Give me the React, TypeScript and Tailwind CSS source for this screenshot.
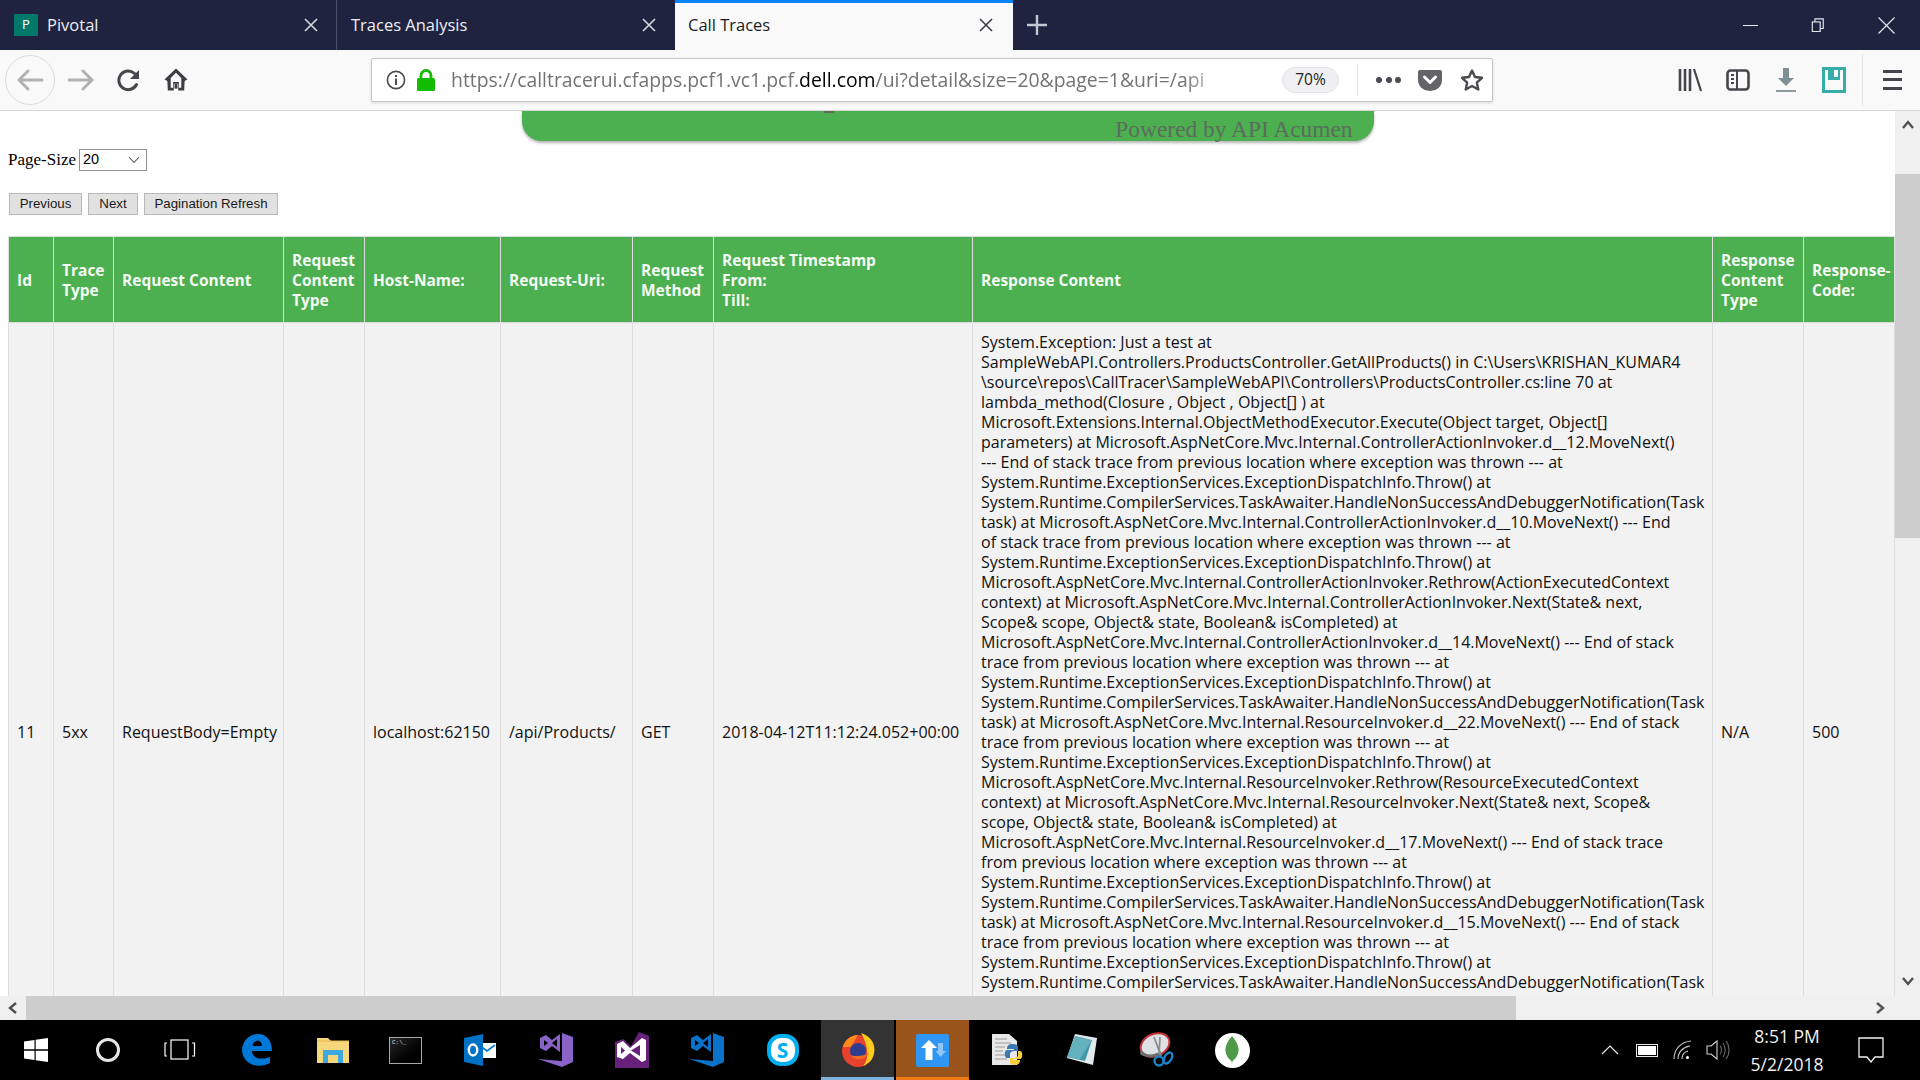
import React from 'react';

const responseLines = [
  'System.Exception: Just a test at',
  'SampleWebAPI.Controllers.ProductsController.GetAllProducts() in C:\\Users\\KRISHAN_KUMAR4',
  '\\source\\repos\\CallTracer\\SampleWebAPI\\Controllers\\ProductsController.cs:line 70 at',
  'lambda_method(Closure , Object , Object[] ) at',
  'Microsoft.Extensions.Internal.ObjectMethodExecutor.Execute(Object target, Object[]',
  'parameters) at Microsoft.AspNetCore.Mvc.Internal.ControllerActionInvoker.d__12.MoveNext()',
  '--- End of stack trace from previous location where exception was thrown --- at',
  'System.Runtime.ExceptionServices.ExceptionDispatchInfo.Throw() at',
  'System.Runtime.CompilerServices.TaskAwaiter.HandleNonSuccessAndDebuggerNotification(Task',
  'task) at Microsoft.AspNetCore.Mvc.Internal.ControllerActionInvoker.d__10.MoveNext() --- End',
  'of stack trace from previous location where exception was thrown --- at',
  'System.Runtime.ExceptionServices.ExceptionDispatchInfo.Throw() at',
  'Microsoft.AspNetCore.Mvc.Internal.ControllerActionInvoker.Rethrow(ActionExecutedContext',
  'context) at Microsoft.AspNetCore.Mvc.Internal.ControllerActionInvoker.Next(State& next,',
  'Scope& scope, Object& state, Boolean& isCompleted) at',
  'Microsoft.AspNetCore.Mvc.Internal.ControllerActionInvoker.d__14.MoveNext() --- End of stack',
  'trace from previous location where exception was thrown --- at',
  'System.Runtime.ExceptionServices.ExceptionDispatchInfo.Throw() at',
  'System.Runtime.CompilerServices.TaskAwaiter.HandleNonSuccessAndDebuggerNotification(Task',
  'task) at Microsoft.AspNetCore.Mvc.Internal.ResourceInvoker.d__22.MoveNext() --- End of stack',
  'trace from previous location where exception was thrown --- at',
  'System.Runtime.ExceptionServices.ExceptionDispatchInfo.Throw() at',
  'Microsoft.AspNetCore.Mvc.Internal.ResourceInvoker.Rethrow(ResourceExecutedContext',
  'context) at Microsoft.AspNetCore.Mvc.Internal.ResourceInvoker.Next(State& next, Scope&',
  'scope, Object& state, Boolean& isCompleted) at',
  'Microsoft.AspNetCore.Mvc.Internal.ResourceInvoker.d__17.MoveNext() --- End of stack trace',
  'from previous location where exception was thrown --- at',
  'System.Runtime.ExceptionServices.ExceptionDispatchInfo.Throw() at',
  'System.Runtime.CompilerServices.TaskAwaiter.HandleNonSuccessAndDebuggerNotification(Task',
  'task) at Microsoft.AspNetCore.Mvc.Internal.ResourceInvoker.d__15.MoveNext() --- End of stack',
  'trace from previous location where exception was thrown --- at',
  'System.Runtime.ExceptionServices.ExceptionDispatchInfo.Throw() at',
  'System.Runtime.CompilerServices.TaskAwaiter.HandleNonSuccessAndDebuggerNotification(Task',
];

function TabClose({ color = '#d7d8e0' }: { color?: string }) {
  return (
    <svg width="16" height="16" viewBox="0 0 16 16" className="shrink-0">
      <path d="M2 2 L14 14 M14 2 L2 14" stroke={color} strokeWidth="1.6" fill="none" />
    </svg>
  );
}

function TabBar() {
  return (
    <div className="flex h-[50px] shrink-0 bg-[#202340] font-['Open_Sans',sans-serif] text-[16.5px]">
      <div className="flex w-[337px] items-center border-r border-[#4a4d68] pl-[14px] pr-[17px] text-[#eceef3]">
        <div className="flex h-[22px] w-[24px] items-center justify-center rounded-[1px] bg-[#00796b] text-[13px] text-white">P</div>
        <span className="ml-[9px] flex-1">Pivotal</span>
        <TabClose />
      </div>
      <div className="flex w-[338px] items-center pl-[14px] pr-[18px] text-[#eceef3]">
        <span className="flex-1">Traces Analysis</span>
        <TabClose />
      </div>
      <div className="flex w-[338px] items-center border-t-[3px] border-[#0a84ff] bg-[#f9f9fa] pl-[13px] pr-[19px] pb-[3px] text-[#1c1c24]">
        <span className="flex-1">Call Traces</span>
        <TabClose color="#3d3d46" />
      </div>
      <div className="flex w-[48px] items-center justify-center">
        <svg width="22" height="22" viewBox="0 0 22 22">
          <path d="M11 1 V21 M1 11 H21" stroke="#c5c7d2" strokeWidth="2.4" fill="none" />
        </svg>
      </div>
      <div className="flex-1" />
      <div className="flex w-[68px] items-center justify-center">
        <div className="h-px w-[15px] bg-[#e8e9ee]" />
      </div>
      <div className="flex w-[68px] items-center justify-center">
        <svg width="14" height="14" viewBox="0 0 16 16" fill="none" stroke="#e8e9ee" strokeWidth="1.3">
          <rect x="1.5" y="4.5" width="9" height="11" fill="#202340" />
          <path d="M4.5 4.5 V1 H14 V12 H10.5" />
        </svg>
      </div>
      <div className="flex w-[68px] items-center justify-center">
        <svg width="17" height="17" viewBox="0 0 17 17">
          <path d="M0.5 0.5 L16.5 16.5 M16.5 0.5 L0.5 16.5" stroke="#e8e9ee" strokeWidth="1.1" fill="none" />
        </svg>
      </div>
    </div>
  );
}

function NavIcons() {
  return (
    <div className="flex items-center">
      <div className="ml-[5px] flex h-[50px] w-[50px] items-center justify-center rounded-full border border-[#dcdcdf]">
        <svg width="28" height="24" viewBox="0 0 28 24" fill="none" stroke="#b1b1b3" strokeWidth="3" strokeLinecap="round" strokeLinejoin="round">
          <path d="M26 12 H3 M12 3 L3 12 L12 21" />
        </svg>
      </div>
      <div className="ml-[11px] flex w-[30px] justify-center">
        <svg width="26" height="24" viewBox="0 0 26 24" fill="none" stroke="#b1b1b3" strokeWidth="3" strokeLinecap="round" strokeLinejoin="round">
          <path d="M1 12 H24 M15 3 L24 12 L15 21" />
        </svg>
      </div>
      <div className="ml-[21px] flex w-[24px] justify-center">
        <svg width="24" height="24" viewBox="0 0 24 24" fill="none">
          <path d="M19.5 16.5 A9.3 9.3 0 1 1 17.5 5.5" stroke="#45454c" strokeWidth="3" strokeLinecap="round" />
          <path d="M22 2 V11 H13 Z" fill="#45454c" />
        </svg>
      </div>
      <div className="ml-[23px] flex w-[24px] justify-center">
        <svg width="25" height="25" viewBox="0 0 25 25">
          <path d="M12.5 1 L24.5 12.5 L21.5 14 L21 24 H14.8 V17 H10.2 V24 H4 L3.5 14 L.5 12.5 Z" fill="#3d3d44" />
          <path d="M12.5 5.5 L18 11 V21 H15.5 V15 H9.5 V21 H7 V11 Z" fill="#f9f9fa" />
          <rect x="11" y="17" width="3" height="5" fill="#3d3d44" />
        </svg>
      </div>
    </div>
  );
}

function UrlBar() {
  return (
    <div className="ml-[183px] flex h-[44px] w-[1122px] shrink-0 items-center rounded-[2px] border border-[#c5c5c8] bg-white font-['Open_Sans',sans-serif] shadow-[0_1px_3px_rgba(0,0,0,0.12)]">
      <svg width="20" height="20" viewBox="0 0 20 20" fill="none" className="ml-[14px] shrink-0">
        <circle cx="10" cy="10" r="8.6" stroke="#4a4a50" strokeWidth="1.6" />
        <rect x="9" y="8.5" width="2" height="6.5" fill="#4a4a50" />
        <rect x="9" y="5" width="2" height="2" fill="#4a4a50" />
      </svg>
      <svg width="20" height="22" viewBox="0 0 20 22" className="ml-[10px] shrink-0">
        <path d="M5 10 V6.5 A5 5 0 0 1 15 6.5 V10" stroke="#12bc00" strokeWidth="2.8" fill="none" />
        <rect x="1" y="9" width="18" height="13" rx="1.5" fill="#12bc00" />
      </svg>
      <div className="ml-[15px] w-[780px] overflow-hidden whitespace-nowrap text-[19.4px] text-[#737373] [mask-image:linear-gradient(to_right,black_94%,transparent)]">
        https://calltracerui.cfapps.pcf1.vc1.pcf.<span className="text-black">dell.com</span>/ui?detail&amp;size=20&amp;page=1&amp;uri=/api
      </div>
      <div className="ml-[51px] flex h-[26px] w-[57px] shrink-0 items-center justify-center rounded-full border border-[#e4e4e6] bg-[#f0f0f2] text-[15.5px] text-[#222]">70%</div>
      <div className="ml-[18px] h-[32px] w-px bg-[#e3e3e5]" />
      <div className="ml-[18px] flex w-[25px] justify-between">
        <div className="h-[6px] w-[6px] rounded-full bg-[#4a4a50]" />
        <div className="h-[6px] w-[6px] rounded-full bg-[#4a4a50]" />
        <div className="h-[6px] w-[6px] rounded-full bg-[#4a4a50]" />
      </div>
      <svg width="24" height="22" viewBox="0 0 24 22" className="ml-[17px] shrink-0">
        <path d="M2 1 H22 Q24 1 24 3 V10 Q24 21 12 22 Q0 21 0 10 V3 Q0 1 2 1 Z" fill="#636368" />
        <path d="M6.5 8 L12 13.5 L17.5 8" stroke="#fff" strokeWidth="3" fill="none" strokeLinecap="round" strokeLinejoin="round" />
      </svg>
      <svg width="24" height="24" viewBox="0 0 24 24" className="ml-[18px] shrink-0">
        <path d="M12 2.5 L15 9 L22 9.8 L16.8 14.6 L18.3 21.5 L12 18 L5.7 21.5 L7.2 14.6 L2 9.8 L9 9 Z" fill="none" stroke="#4a4a50" strokeWidth="2.4" strokeLinejoin="round" />
      </svg>
    </div>
  );
}

function NavRight() {
  return (
    <div className="flex flex-1 items-center">
      <svg width="24" height="24" viewBox="0 0 24 24" className="ml-[185px] shrink-0" stroke="#45454c" fill="none">
        <path d="M2 1 V23 M7 1 V23 M12 1 V23" strokeWidth="2.6" />
        <path d="M16 1 L23 23" strokeWidth="2.2" />
      </svg>
      <svg width="24" height="24" viewBox="0 0 24 24" className="ml-[24px] shrink-0" fill="none">
        <rect x="1.5" y="2.5" width="21" height="19" rx="3" stroke="#45454c" strokeWidth="2.6" />
        <path d="M11 3 V21" stroke="#45454c" strokeWidth="2" />
        <path d="M5 7 H8 M5 11 H8 M5 15 H8" stroke="#45454c" strokeWidth="1.8" />
      </svg>
      <svg width="20" height="26" viewBox="0 0 20 26" className="ml-[26px] shrink-0">
        <path d="M7 1 H13 V11 H18 L10 19 L2 11 H7 Z" fill="#7c9095" />
        <rect x="0" y="23" width="20" height="2" fill="#8f9a9d" />
      </svg>
      <svg width="24" height="26" viewBox="0 0 24 26" className="ml-[26px] shrink-0" fill="none">
        <path d="M1.5 1.5 H22.5 V24.5 H1.5 Z" stroke="#36ada8" strokeWidth="3" />
        <path d="M6 1 H18 V13 H6 Z" fill="#36ada8" />
        <rect x="12" y="3" width="4" height="7" fill="#f9f9fa" />
      </svg>
      <div className="ml-[16px] h-[52px] w-px bg-[#e3e3e5]" />
      <div className="ml-[20px] flex h-[20px] w-[19px] flex-col justify-between">
        <div className="h-[3px] bg-[#45454c]" />
        <div className="h-[3px] bg-[#45454c]" />
        <div className="h-[3px] bg-[#45454c]" />
      </div>
    </div>
  );
}

function Chevron({ d }: { d: string }) {
  return (
    <svg width="14" height="14" viewBox="0 0 14 14" className="shrink-0">
      <path d={d} stroke="#505050" strokeWidth="2.4" fill="none" />
    </svg>
  );
}

function TraceTable() {
  const thClass = "border border-[#dddddd] bg-[#4caf50] px-2 text-left text-[15.5px] font-bold leading-[20px] text-[#f4fbf4]";
  const tdClass = "border border-[#dddddd] px-2 align-middle whitespace-nowrap";
  return (
    <table className="ml-2 w-[1886px] table-fixed border-collapse bg-[#f2f2f2] font-['Open_Sans',sans-serif] text-[16px] leading-[20px] text-[#111]">
      <colgroup>
        <col className="w-[45px]" />
        <col className="w-[60px]" />
        <col className="w-[170px]" />
        <col className="w-[81px]" />
        <col className="w-[136px]" />
        <col className="w-[132px]" />
        <col className="w-[81px]" />
        <col className="w-[259px]" />
        <col className="w-[740px]" />
        <col className="w-[91px]" />
        <col className="w-[91px]" />
      </colgroup>
      <thead>
        <tr className="h-[86px]">
          <th className={thClass}>Id</th>
          <th className={thClass}>Trace Type</th>
          <th className={thClass}>Request Content</th>
          <th className={thClass}>Request Content Type</th>
          <th className={thClass}>Host-Name:</th>
          <th className={thClass}>Request-Uri:</th>
          <th className={thClass}>Request Method</th>
          <th className={thClass}>
            Request Timestamp
            <br />
            From:
            <br />
            Till:
          </th>
          <th className={thClass}>Response Content</th>
          <th className={thClass}>Response Content Type</th>
          <th className={thClass}>Response-Code:</th>
        </tr>
      </thead>
      <tbody>
        <tr className="h-[818px]">
          <td className={tdClass}>11</td>
          <td className={tdClass}>5xx</td>
          <td className={tdClass}>RequestBody=Empty</td>
          <td className={tdClass}></td>
          <td className={tdClass}>localhost:62150</td>
          <td className={tdClass}>/api/Products/</td>
          <td className={tdClass}>GET</td>
          <td className={tdClass}>2018-04-12T11:12:24.052+00:00</td>
          <td className="border border-[#dddddd] px-2 pt-[9px] align-top whitespace-nowrap">
            {responseLines.map((line, i) => (
              <div key={i}>{line}</div>
            ))}
          </td>
          <td className={tdClass}>N/A</td>
          <td className={tdClass}>500</td>
        </tr>
      </tbody>
    </table>
  );
}

function PageContent() {
  const btn = "h-[22px] border border-[#b8b8b8] bg-[#e1e1e1] text-[13.3px] leading-none text-[#1a1a1a] font-['Liberation_Sans',sans-serif]";
  return (
    <div className="h-full overflow-hidden bg-white">
      <div className="mx-auto h-[30px] w-[852px] rounded-b-[20px] bg-[#4caf50] shadow-[0_2px_3px_rgba(0,0,0,0.3)]">
        <div className="ml-[302px] h-[2px] w-[10px] bg-[#5e6a5f]" />
        <div className="pr-[21px] text-right font-['Liberation_Serif',serif] text-[23.4px] leading-[32px] text-[#5c6c5d]">Powered by API Acumen</div>
      </div>
      <div className="ml-2 mt-[8px] flex h-[22px] items-center font-['Liberation_Serif',serif] text-[17px] text-black">
        Page-Size
        <div className="ml-[3px] flex h-[22px] w-[68px] items-center justify-between border border-[#8f8f8f] bg-white pl-[3px] pr-[6px] font-['Liberation_Sans',sans-serif] text-[14.5px]">
          20
          <svg width="12" height="8" viewBox="0 0 12 8">
            <path d="M1 1 L6 6.5 L11 1" stroke="#555" strokeWidth="1.1" fill="none" />
          </svg>
        </div>
      </div>
      <div className="ml-[9px] mt-[22px] flex gap-[6px]">
        <button className={`${btn} w-[73px]`}>Previous</button>
        <button className={`${btn} w-[50px]`}>Next</button>
        <button className={`${btn} w-[134px]`}>Pagination Refresh</button>
      </div>
      <div className="mt-[21px]">
        <TraceTable />
      </div>
    </div>
  );
}

function Slot({ w, bg = '', bar = '', children }: { w: string; bg?: string; bar?: string; children?: React.ReactNode }) {
  return (
    <div className={`relative flex h-full shrink-0 items-center justify-center ${w} ${bg}`}>
      {children}
      {bar && <div className={`absolute bottom-0 left-0 right-0 h-[3px] ${bar}`} />}
    </div>
  );
}

function VsLogo({ color }: { color: string }) {
  return (
    <svg width="36" height="36" viewBox="0 0 36 36">
      <path d="M24 1 L35 5 V30 L24 35 L0 27 L24 29 Z" fill={color} />
      <path d="M2 6 L8 3 L14 8 L22 2 V20 L14 14 L8 19 L2 16 Z M6 8 V14 L10 11 Z M14 11 L19 15 V7 Z" fill={color} fillRule="evenodd" />
    </svg>
  );
}

function TaskIcons() {
  return (
    <div className="flex h-full items-center">
      <Slot w="w-[72px]">
        <svg width="24" height="24" viewBox="0 0 24 24" fill="#fff">
          <path d="M0 3.5 L10.5 2 V11.3 H0 Z M11.7 1.8 L24 0 V11.3 H11.7 Z M0 12.7 H10.5 V22 L0 20.5 Z M11.7 12.7 H24 V24 L11.7 22.2 Z" />
        </svg>
      </Slot>
      <Slot w="w-[72px]">
        <div className="h-[24px] w-[24px] rounded-full border-[3px] border-[#e5e5e5]" />
      </Slot>
      <Slot w="w-[72px]">
        <svg width="32" height="22" viewBox="0 0 32 22" fill="none" stroke="#fff" strokeWidth="1.2">
          <rect x="7" y="1" width="17" height="19" />
          <path d="M3 4 H1 V17 H3 M28 4 H30.5 V17 H28" />
        </svg>
      </Slot>
      <Slot w="w-[81px]">
        <svg width="32" height="32" viewBox="0 0 32 32">
          <path d="M1 17 C1 6 9 0 17 0 C26 0 31 7 31 17 H11 C11 23 18 27 29 23 V29 C20 34 3 33 1 17 Z M11.5 12 H21 C21 5 12 5 11.5 12 Z" fill="#0078d7" fillRule="evenodd" />
        </svg>
      </Slot>
      <Slot w="w-[71px]">
        <svg width="32" height="28" viewBox="0 0 32 28">
          <path d="M0 2 H11 L14 5 H32 V27 H0 Z" fill="#f6d77c" />
          <path d="M0 5 H32" stroke="#e5b94e" strokeWidth="1" />
          <path d="M6 14 H26 V27 H21 V19 H11 V27 H6 Z" fill="#3ca9e0" />
        </svg>
      </Slot>
      <Slot w="w-[75px]">
        <div className="h-[27px] w-[33px] border border-[#a8a8a8] bg-gradient-to-br from-[#2a2a2a] to-black pl-[2px] font-['Liberation_Mono',monospace] text-[6px] leading-[9px] text-[#ddd]">C:\_</div>
      </Slot>
      <Slot w="w-[74px]">
        <svg width="32" height="32" viewBox="0 0 32 32">
          <rect x="14" y="9" width="18" height="15" fill="#fff" />
          <path d="M15 11 L23 17 L31 11" stroke="#0078d7" strokeWidth="1.6" fill="none" />
          <path d="M0 4 L19 0 V32 L0 28 Z" fill="#0072c6" />
          <ellipse cx="9" cy="16" rx="4.2" ry="5.5" fill="none" stroke="#fff" strokeWidth="2.4" />
        </svg>
      </Slot>
      <Slot w="w-[77px]">
        <VsLogo color="#8a63c8" />
      </Slot>
      <Slot w="w-[75px]">
        <svg width="34" height="36" viewBox="0 0 34 36">
          <path d="M24 0 L34 4 V36 H0 V10 L8 7 L16 14 Z" fill="#68217a" />
          <path d="M2 12 L8 9 L15 16 L27 6 L31 8 V28 L27 30 L15 21 L8 27 L2 25 Z M6 15 V22 L10 18.5 Z M16 18.5 L25 24 V13 Z" fill="#fff" fillRule="evenodd" />
        </svg>
      </Slot>
      <Slot w="w-[75px]">
        <VsLogo color="#0a72c8" />
      </Slot>
      <Slot w="w-[77px]">
        <div className="flex h-[32px] w-[32px] items-center justify-center rounded-[14px] border-[4px] border-[#00aff0] bg-white font-['Open_Sans',sans-serif] text-[21px] font-bold leading-none text-[#00aff0]">S</div>
      </Slot>
      <Slot w="w-[73px]" bg="bg-[#333333]" bar="bg-[#7fb3dc]">
        <svg width="34" height="34" viewBox="0 0 34 34">
          <circle cx="17" cy="18" r="16" fill="#e8422f" />
          <path d="M2 14 A16 16 0 0 1 17 2 L10 14 Z" fill="#ff8a1e" />
          <path d="M20 0 C30 3 35 12 33 20 C32 27 27 31 22 33 C28 27 28 14 20 0 Z" fill="#ffcb1f" />
          <circle cx="17" cy="18" r="8" fill="#2f3d8f" />
          <path d="M9 22 C13 28 24 28 28 20 C24 23 14 24 9 22 Z" fill="#f26a21" />
        </svg>
      </Slot>
      <div className="h-full w-[2px]" />
      <Slot w="w-[73px]" bg="bg-[#99541c]" bar="bg-[#f07b15]">
        <div className="flex h-[33px] w-[33px] items-center justify-center rounded-[2px] bg-[#2f96f3]">
          <svg width="28" height="28" viewBox="0 0 28 28">
            <path d="M2 12 L10 4 L18 12 H13.5 V24 H6.5 V12 Z" fill="#fff" />
            <path d="M19 7 H24 V15 H27 L21.5 21 L16.5 15 H19 Z" fill="#8fc6f7" />
          </svg>
        </div>
      </Slot>
      <Slot w="w-[78px]">
        <svg width="34" height="34" viewBox="0 0 34 34">
          <path d="M1 1 H18 L26 8 V32 H1 Z" fill="#e8e8e8" />
          <path d="M4 6 H16 M4 10 H20 M4 14 H14 M4 18 H12 M4 22 H14 M4 26 H16" stroke="#9a9a9a" strokeWidth="1" />
          <path d="M22 11 C17 11 16 13 16 16 H23 V17 H16 C13 17 13 25 16 25 H19 V21 C19 19 21 18 23 18 H27 V14 C27 12 25 11 22 11 Z" fill="#3a78b0" />
          <path d="M23 32 C28 32 29 30 29 27 H22 V26 H29 C32 26 32 18 29 18 H27 V22 C27 24 25 25 23 25 H19 V29 C19 31 21 32 23 32 Z" fill="#f7cf3b" />
        </svg>
      </Slot>
      <Slot w="w-[70px]">
        <svg width="34" height="34" viewBox="0 0 34 34">
          <path d="M10 1 L32 5 L28 32 L2 25 Z" fill="#e4e9ec" />
          <path d="M10 3 L27 7 L20 28 L2 24 Z" fill="#3e9aa8" />
          <path d="M10 3 L27 7 L15 26 L2 24 Z" fill="#7cc1cc" opacity="0.6" />
        </svg>
      </Slot>
      <Slot w="w-[80px]">
        <svg width="36" height="36" viewBox="0 0 36 36">
          <ellipse cx="16" cy="13" rx="15" ry="11" transform="rotate(-25 16 13)" fill="#dfe2e4" stroke="#c6343b" strokeWidth="2" />
          <path d="M2 17 C6 24 14 24 22 19 L22 23 C14 26 6 26 1 22 Z" fill="#6e6e6e" />
          <path d="M15 5 L22 24 M21 5 L20 22" stroke="#8b8f92" strokeWidth="1.8" />
          <circle cx="20" cy="29" r="4.5" fill="none" stroke="#1c83c6" strokeWidth="2.4" />
          <ellipse cx="29" cy="26" rx="3.5" ry="6" transform="rotate(30 29 26)" fill="none" stroke="#1c83c6" strokeWidth="2.4" />
        </svg>
      </Slot>
      <Slot w="w-[70px]">
        <div className="flex h-[35px] w-[35px] items-center justify-center rounded-full bg-white">
          <svg width="14" height="28" viewBox="0 0 14 28">
            <path d="M7 0 C12 6 14 11 13.5 15 C13 20 10 23 7.5 25 L7 28 L6.5 25 C4 23 1 20 .5 15 C0 11 2 6 7 0 Z" fill="#4f9a46" />
          </svg>
        </div>
      </Slot>
    </div>
  );
}

function Tray() {
  return (
    <div className="ml-auto flex h-full items-center text-[#f2f2f2]">
      <svg width="18" height="10" viewBox="0 0 18 10" className="shrink-0">
        <path d="M1 9 L9 1 L17 9" stroke="#e8e8e8" strokeWidth="1.2" fill="none" />
      </svg>
      <div className="ml-[17px] flex h-[13px] w-[22px] items-center justify-center border border-[#e8e8e8] p-px">
        <div className="h-full w-full bg-white" />
      </div>
      <svg width="20" height="20" viewBox="0 0 20 20" fill="none" stroke="#c8c8c8" className="ml-[15px] shrink-0">
        <path d="M1 19 C1 9 8 2 18 1 M5 19 C5 12 10 7 17 6 M9 19 C9 15 11 12 15 11" strokeWidth="1.1" />
        <circle cx="14.5" cy="17.5" r="1.5" fill="#fff" stroke="none" />
      </svg>
      <svg width="24" height="24" viewBox="0 0 24 24" fill="none" stroke="#cfcfcf" strokeWidth="1.1" className="ml-[13px] shrink-0">
        <path d="M1 8 H5 L11 3 V21 L5 16 H1 Z" />
        <path d="M14 8 C16 10 16 14 14 16 M17 5 C20 9 20 15 17 19 M20 3 C24 8 24 16 20 21" stroke="#666" />
      </svg>
      <div className="ml-[7px] w-[100px] text-center font-['Open_Sans',sans-serif] text-[17.5px] leading-[28px]">
        <div>8:51 PM</div>
        <div>5/2/2018</div>
      </div>
      <div className="ml-[15px] flex w-[68px] shrink-0 justify-start pl-[6px]">
        <svg width="26" height="26" viewBox="0 0 26 26" fill="none" stroke="#f2f2f2" strokeWidth="1.3">
          <path d="M1 1 H25 V20 H17 L13 25 L9 20 H1 Z" />
        </svg>
      </div>
    </div>
  );
}

export default function App() {
  return (
    <div className="flex h-screen w-[1920px] flex-col overflow-hidden bg-white">
      <TabBar />
      <div className="flex h-[61px] shrink-0 items-center border-b border-[#d6d6d8] bg-[#f9f9fa] pb-px">
        <NavIcons />
        <UrlBar />
        <NavRight />
      </div>
      <div className="flex min-h-0 flex-1">
        <div className="min-w-0 flex-1">
          <PageContent />
        </div>
        <div className="flex h-full w-[25px] shrink-0 flex-col items-center bg-[#f0f0f0] pt-[7px]">
          <Chevron d="M2 10 L7 4 L12 10" />
          <div className="mt-[42px] h-[364px] w-full bg-[#cdcdcd]" />
          <div className="flex-1" />
          <div className="mb-[8px]">
            <Chevron d="M2 4 L7 10 L12 4" />
          </div>
        </div>
      </div>
      <div className="flex h-[24px] shrink-0 items-center bg-[#f0f0f0]">
        <div className="flex w-[26px] justify-center">
          <Chevron d="M10 2 L4 7 L10 12" />
        </div>
        <div className="h-full w-[1490px] bg-[#cdcdcd]" />
        <div className="flex-1" />
        <div className="mr-[33px]">
          <Chevron d="M4 2 L10 7 L4 12" />
        </div>
      </div>
      <div className="flex h-[60px] shrink-0 bg-black">
        <TaskIcons />
        <Tray />
      </div>
    </div>
  );
}
